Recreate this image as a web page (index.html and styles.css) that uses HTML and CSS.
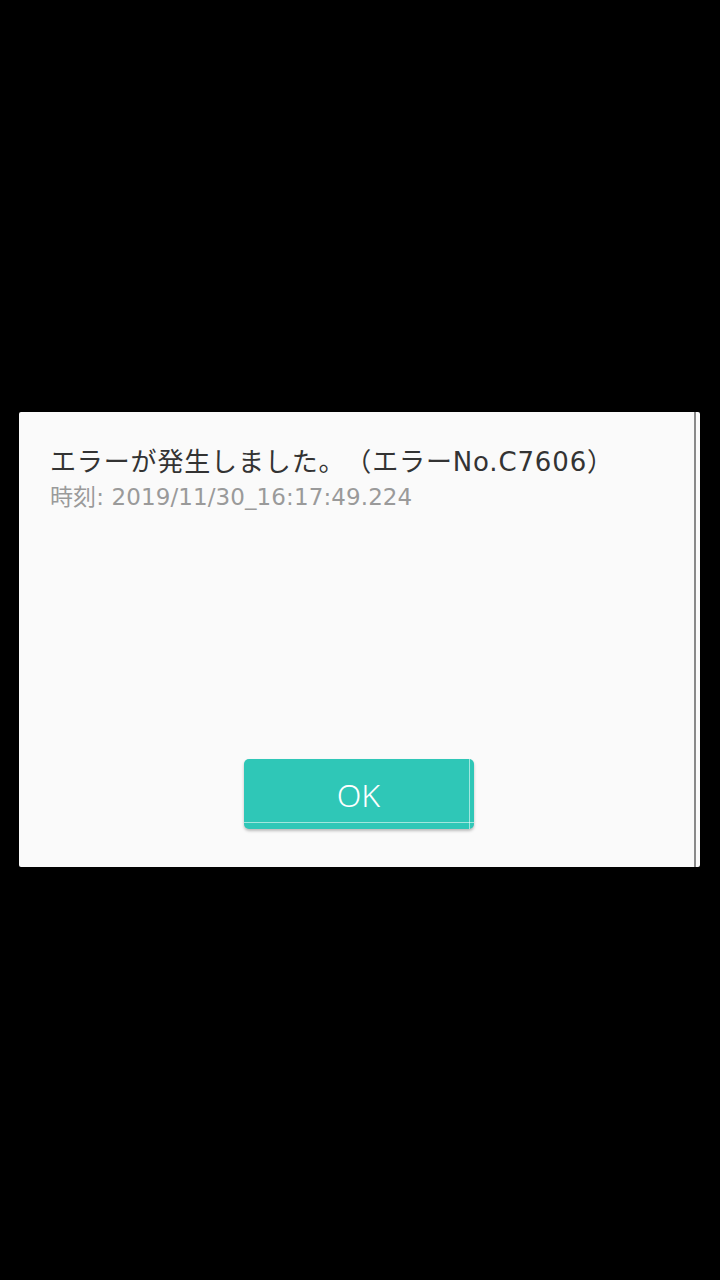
FILE: index.html
```html
<!DOCTYPE html>
<html lang="ja">
<head>
<meta charset="utf-8">
<link rel="stylesheet" href="styles.css">
</head>
<body>
<div class="screen">
  <div class="dialog">
    <div class="content">
      <div class="title">エラーが発生しました。（エラーNo.C7606）</div>
      <div class="time">時刻: 2019/11/30_16:17:49.224</div>
    </div>
    <div class="actions">
      <button class="ok">OK</button>
    </div>
    <div class="scrollbar"></div>
  </div>
</div>
</body>
</html>
```
FILE: styles.css
```css
html, body {
  margin: 0;
  padding: 0;
  background: #000;
}
.screen {
  width: 720px;
  height: 1280px;
  display: flex;
  flex-direction: column;
  padding-top: 412px;
  box-sizing: border-box;
}
.dialog {
  position: relative;
  margin-left: 19px;
  width: 681px;
  height: 455px;
  background: #fafafa;
  border-radius: 2px;
  display: flex;
  flex-direction: column;
  font-family: "DejaVu Sans", "Noto Sans CJK JP", sans-serif;
  text-spacing-trim: space-all;
}
.content {
  padding: 31px 0 0 31px;
  flex: 1;
}
.title {
  font-size: 26px;
  line-height: 38px;
  color: #333;
  letter-spacing: 0.85px;
}
.time {
  font-size: 23px;
  line-height: 32px;
  color: #9a9a9a;
  letter-spacing: 0.1px;
}
.actions {
  display: flex;
  justify-content: center;
  padding-bottom: 38px;
}
.ok {
  position: relative;
  width: 230px;
  height: 70px;
  margin-left: -2px;
  border: none;
  border-radius: 5px;
  background: #2fc7b7;
  color: #fff;
  font-family: "Noto Sans", "Open Sans", sans-serif;
  font-weight: 300;
  font-size: 32px;
  box-shadow: 0 2px 3px rgba(0,0,0,0.25);
  padding: 0;
}
.ok::before {
  content: "";
  position: absolute;
  left: 0;
  right: 0;
  bottom: 6px;
  height: 1px;
  background: rgba(255,255,255,0.55);
}
.ok::after {
  content: "";
  position: absolute;
  top: 0;
  bottom: 0;
  right: 4px;
  width: 1px;
  background: rgba(255,255,255,0.55);
}
.scrollbar {
  position: absolute;
  right: 4px;
  top: 0;
  bottom: 0;
  width: 2px;
  background: #8a8a8a;
}
```
